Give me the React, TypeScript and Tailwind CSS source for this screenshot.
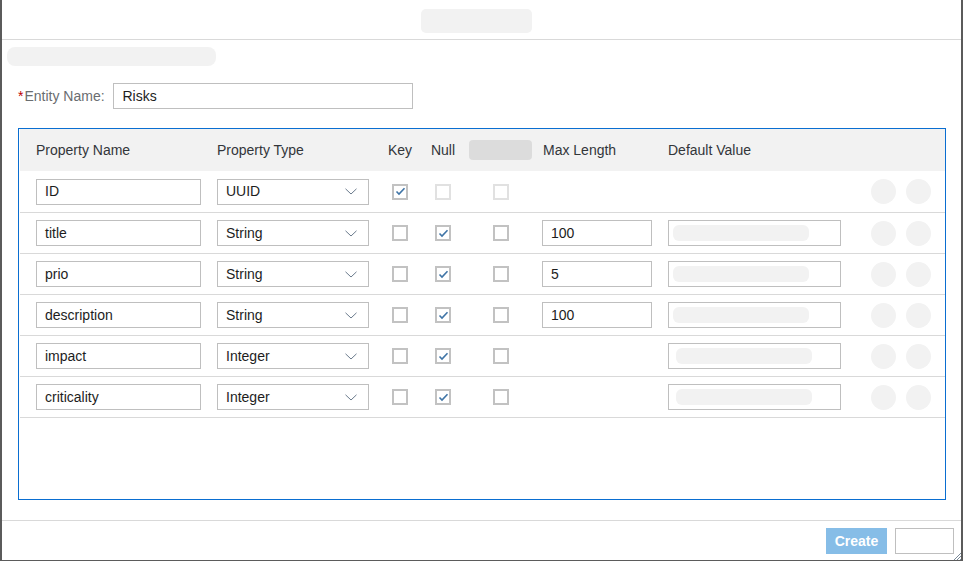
import React from "react";

type Prop = {
    name: string;
    type: string;
    key: boolean;
    nullable: boolean;
    locked: boolean;
    maxLength: string | null;
    hasDefault: boolean;
    phInset: string;
};

const rows: Prop[] = [
    { name: "ID", type: "UUID", key: true, nullable: false, locked: true, maxLength: null, hasDefault: false, phInset: "pl-[4px]" },
    { name: "title", type: "String", key: false, nullable: true, locked: false, maxLength: "100", hasDefault: true, phInset: "pl-[4px]" },
    { name: "prio", type: "String", key: false, nullable: true, locked: false, maxLength: "5", hasDefault: true, phInset: "pl-[4px]" },
    { name: "description", type: "String", key: false, nullable: true, locked: false, maxLength: "100", hasDefault: true, phInset: "pl-[4px]" },
    { name: "impact", type: "Integer", key: false, nullable: true, locked: false, maxLength: null, hasDefault: true, phInset: "pl-[7px]" },
    { name: "criticality", type: "Integer", key: false, nullable: true, locked: false, maxLength: null, hasDefault: true, phInset: "pl-[7px]" },
];

// grid columns measured off the table, left edge to the action circles
const cols = "grid grid-cols-[197px_161px_44px_42px_73px_131px_200px_1fr]";

function Checkbox({ checked, disabled }: { checked: boolean; disabled?: boolean })
{
    return (
        <div className={`w-[16px] h-[16px] border-2 flex items-center justify-center bg-white ${disabled ? "border-[#e1e1e1]" : "border-[#c2c2c2]"}`}>
            {checked && (
                <svg width="11" height="9" viewBox="0 0 11 9">
                    <polyline points="1.5,4.5 4,7 9.5,1.2" fill="none" stroke="#3f74a6" strokeWidth="1.6" />
                </svg>
            )}
        </div>
    );
}

function Field({ value, width }: { value: string; width: string })
{
    return (
        <div className={`${width} h-[26px] border border-[#bfbfbf] bg-white pl-[8px] flex items-center text-[14px] text-[#1d1d1d]`}>
            {value}
        </div>
    );
}

function TypeSelect({ value }: { value: string })
{
    return (
        <div className="w-[152px] h-[26px] border border-[#bfbfbf] bg-white pl-[8px] pr-[11px] flex items-center justify-between text-[14px] text-[#1d1d1d]">
            <span>{value}</span>
            <svg width="12" height="7" viewBox="0 0 12 7">
                <polyline points="0.5,0.8 6,6 11.5,0.8" fill="none" stroke="#6a7a8c" strokeWidth="1" />
            </svg>
        </div>
    );
}

function App()
{
    return (
        <div className="w-[963px] h-[561px] bg-[#5b5b5b] pl-[2px] pr-[2px] pb-[1px] flex" style={{ fontFamily: '"Liberation Sans", Arial, sans-serif' }}>
            <div className="flex-1 bg-white flex flex-col relative">
                {/* header with title placeholder */}
                <div className="h-[40px] border-b border-[#d9d9d9] pt-[9px] pl-[419px] shrink-0">
                    <div className="w-[111px] h-[24px] rounded-[5px] bg-[#f2f2f2]" />
                </div>

                <div className="flex-1 flex flex-col">
                    <div className="ml-[5px] mt-[7px] w-[209px] h-[19px] rounded-[8px] bg-[#f2f2f2]" />

                    <div className="mt-[17px] ml-[16px] flex items-center h-[26px]">
                        <span className="text-[#bb0000] text-[14px] mr-[1px]">*</span>
                        <span className="text-[14px] text-[#6a6d70] w-[89px]">Entity Name:</span>
                        <Field value="Risks" width="w-[300px]" />
                    </div>

                    <div className="mt-[19px] ml-[16px] w-[928px] h-[372px] border border-[#0a6ed1] pl-[1px] pr-0">
                        <div className={`${cols} h-[42px] bg-[#f2f2f2] items-center text-[14px] text-[#32363a]`}>
                            <span className="pl-[16px]">Property Name</span>
                            <span>Property Type</span>
                            <span className="text-center">Key</span>
                            <span className="text-center">Null</span>
                            <div className="flex justify-center">
                                <div className="w-[63px] h-[20px] rounded-[4px] bg-[#dcdcdc]" />
                            </div>
                            <span className="pl-[6px]">Max Length</span>
                            <span>Default Value</span>
                            <span />
                        </div>

                        {rows.map((r, i) => (
                            <div key={r.name} className={`${cols} ${i === 0 ? "h-[42px]" : "h-[41px]"} border-b border-[#d9d9d9] items-center`}>
                                <div className="pl-[16px]">
                                    <Field value={r.name} width="w-[165px]" />
                                </div>
                                <TypeSelect value={r.type} />
                                <div className="flex justify-center">
                                    <Checkbox checked={r.key} />
                                </div>
                                <div className="flex justify-center">
                                    <Checkbox checked={r.nullable} disabled={r.locked} />
                                </div>
                                <div className="flex justify-center">
                                    <Checkbox checked={false} disabled={r.locked} />
                                </div>
                                <div className="pl-[5px]">
                                    {r.maxLength !== null && <Field value={r.maxLength} width="w-[110px]" />}
                                </div>
                                <div>
                                    {r.hasDefault && (
                                        <div className={`w-[173px] h-[26px] border border-[#bfbfbf] bg-white ${r.phInset} flex items-center`}>
                                            <div className="w-[136px] h-[16px] rounded-[6px] bg-[#f2f2f2]" />
                                        </div>
                                    )}
                                </div>
                                <div className="flex gap-[10px] pl-[3px]">
                                    <div className="w-[25px] h-[25px] rounded-full bg-[#f2f2f2]" />
                                    <div className="w-[25px] h-[25px] rounded-full bg-[#f2f2f2]" />
                                </div>
                            </div>
                        ))}
                    </div>
                </div>

                {/* footer */}
                <div className="h-[40px] border-t border-[#d9d9d9] shrink-0 flex justify-end items-start pt-[7px] pr-[7px] gap-[8px]">
                    <div className="w-[61px] h-[26px] bg-[#86bde7] text-white text-[14px] font-bold flex items-center justify-center">
                        Create
                    </div>
                    <div className="w-[59px] h-[26px] border border-[#bfbfbf] bg-white" />
                </div>

                <svg className="absolute right-0 bottom-0" width="8" height="8" viewBox="0 0 8 8">
                    <line x1="1" y1="8" x2="8" y2="1" stroke="#7a8a99" strokeWidth="1" />
                    <line x1="4" y1="8" x2="8" y2="4" stroke="#7a8a99" strokeWidth="1" />
                    <line x1="7" y1="8" x2="8" y2="7" stroke="#7a8a99" strokeWidth="1" />
                </svg>
            </div>
        </div>
    );
}

export default App;
